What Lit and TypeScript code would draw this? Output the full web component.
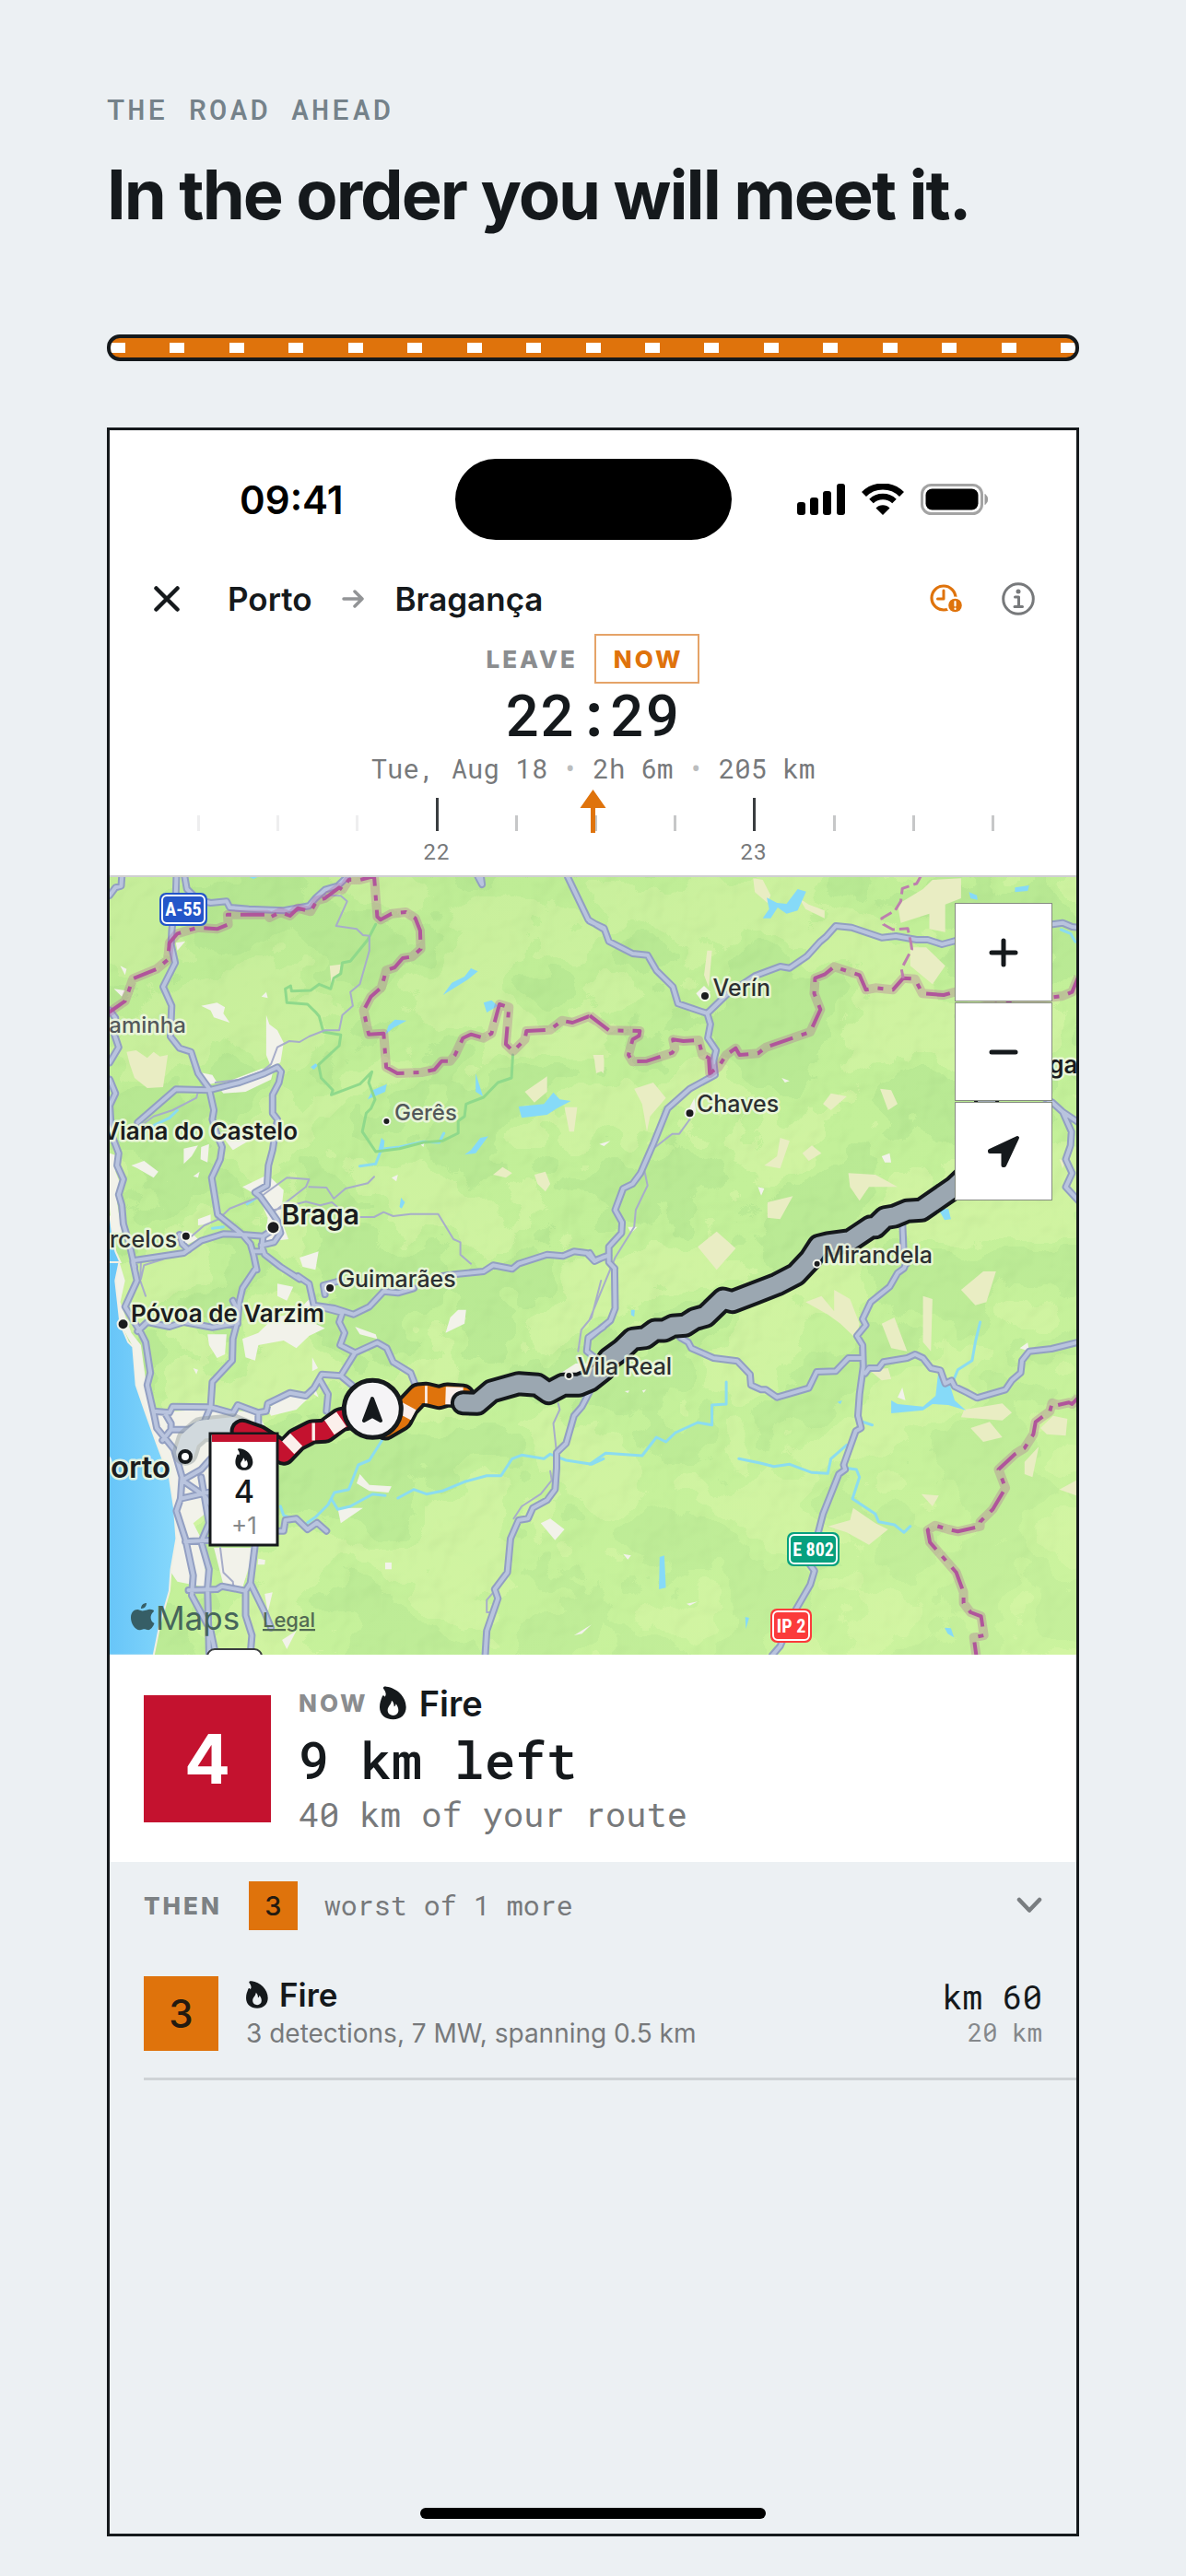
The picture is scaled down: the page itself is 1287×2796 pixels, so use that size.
import { LitElement, html, svg, css } from "lit";
import { customElement } from "lit/decorators.js";

/* ---------- map data ----------
   The map is digitised on four sheets. Sheet coordinates are turned into
   map units (1049 x 844) by the origin of the sheet and its resolution. */
type Sheet = "nw" | "ne" | "sw" | "se";
const ORIGIN: Record<Sheet, [number, number]> = {
  nw: [-4, -7],
  ne: [521, -7],
  sw: [-4, 418],
  se: [521, 418],
};
const at = (s: Sheet, x: number, y: number): [number, number] => [
  Math.round((x / 2.904 + ORIGIN[s][0]) * 10) / 10,
  Math.round((y / 3 + ORIGIN[s][1]) * 10) / 10,
];
const line = (s: Sheet, pts: string) =>
  "M" +
  pts
    .trim()
    .split(/\s+/)
    .map((p) => {
      const [x, y] = p.split(",").map(Number);
      return at(s, x, y).join(" ");
    })
    .join("L");
const lines = (s: Sheet, list: string[]) => list.map((p) => line(s, p)).join("");
const areas = (s: Sheet, list: string[]) => list.map((p) => line(s, p) + "Z").join("");

const ROADS =
  lines("nw", [
    "222,20 220,75 208,190 205,240 218,300 180,378 207,440 203,540 232,578 268,590 290,660 325,710 340,780 335,810 350,860 366,900 360,940 333,1000 352,1120 430,1185 455,1215 465,1250 475,1300",
    "248,20 255,60 290,95 330,105 380,100 390,120 450,125 560,130 640,115 660,90 690,62 730,50 760,20",
    "50,20 48,50 30,55 12,80",
    "12,455 30,480 22,520 40,575 12,625",
    "12,680 30,725 12,765 18,860 40,920 35,960 55,1005 40,1055 50,1090 55,1150 75,1220 90,1290",
    "100,820 220,712 325,715 420,690 500,660 540,640 552,655 545,690 525,730 525,790 540,810 525,910 512,960 508,1025 470,1048 485,1060 520,1110 540,1140 550,1180 530,1210 490,1220 500,1250 550,1290 610,1330",
    "85,1270 245,1245 300,1205 370,1183 430,1185 495,1190 540,1160",
    "495,1190 490,1240 465,1240",
    "232,1185 240,1215 260,1235",
    "1060,1320 1110,1313 1190,1305 1220,1285 1280,1297 1300,1280 1390,1250 1440,1255 1475,1240 1515,1245 1540,1272 1568,1258",
    "1455,20 1520,160 1568,190",
    "1172,20 1185,45 1182,20",
  ]) +
  lines("ne", [
    "0,165 45,187 60,230 135,270 182,275 210,325 262,378 278,433 370,465 380,500 372,545 398,585 390,620 395,665 315,710 245,775 200,890 160,985 135,1020 105,1035 80,1105 102,1145 100,1180 60,1225 60,1275 78,1295",
    "370,465 430,405 520,343 600,312 630,317 685,278 725,232 745,215 775,180 825,185 920,218 965,213 1030,225 1065,225 1110,240 1200,215",
    "1400,180 1458,175 1490,170 1520,183 1540,185",
    "1400,720 1458,755 1490,785 1540,820",
    "1490,785 1518,850 1515,895 1500,940 1520,985 1500,1030 1540,1075",
    "0,1245 15,1270 60,1252",
    "985,1140 990,1260 998,1280",
  ]) +
  lines("sw", [
    "85,0 98,60 60,145 110,230 125,260 140,360 130,400 150,490 160,540 215,610 240,700 235,770 222,810 250,900 275,1020 270,1085 330,1200 345,1275",
    "472,20 430,85 420,130 415,190 400,250 398,320 335,390 330,470 310,520 260,545 205,545 178,580",
    "150,485 200,490 210,470 330,472 400,492 415,465 480,490 480,560",
    "100,225 130,195 200,210 245,195 335,212 400,200",
    "400,125 412,150 415,200",
    "605,45 640,70 655,140 720,150 780,170 830,145 875,95 920,100 970,85",
    "690,105 685,75 740,60",
    "655,140 745,165 735,195 752,230 738,270 785,295 740,370 680,365 655,410 630,435 580,425 510,460 505,485 480,490",
    "785,295 855,262 885,280 905,325 960,360 975,400",
    "740,370 775,400",
    "675,385 700,430 695,485",
    "185,490 205,525 205,545",
    "240,710 300,675 330,640",
    "235,770 330,748",
    "240,710 310,760 330,790",
    "300,700 310,760 325,850 300,910 325,1000 320,1060 325,1275",
    "250,910 330,905",
    "260,1068 350,1065 365,1055 440,1070 455,1045 470,920",
    "455,1045 500,1140 520,1190",
    "440,1070 440,1150 460,1215 455,1275",
    "545,875 560,875 565,840 600,835 635,870 665,848 695,875",
    "1568,210 1520,245 1515,290 1540,310 1530,330",
    "1530,410 1500,470 1475,500 1450,590 1420,620 1420,670 1415,740 1390,775 1345,800 1330,835 1300,840 1275,900 1265,1010 1225,1065 1235,1095 1200,1200 1195,1280",
  ]) +
  lines("se", [
    "78,20 80,150 65,190 0,245",
    "285,245 310,260 320,280 390,312 465,322 505,365 508,400 540,415 555,415 590,440 690,410 715,357 775,355 815,312 860,312",
    "998,0 990,20 970,35 945,80 885,130 860,185 870,205 842,240 860,270 862,340 850,430 845,500 855,540 838,550 800,660 805,675 785,690 735,820 715,900 690,980 708,1005 695,1050 650,1130 600,1250 575,1280",
    "868,362 880,345 910,345 925,325 1000,312 1025,300 1050,312 1075,345 1105,352 1120,395 1140,385 1150,405 1190,425 1220,442 1310,415 1330,385 1358,360 1362,320 1385,290 1455,282 1540,260",
  ]);

const LANES =
  lines("nw", [
    "690,80 740,82 760,100 725,180 790,190 810,210 830,212 830,260 800,370 770,395 778,440 745,470 735,520 690,520 640,540 610,558 578,555 540,575 520,630 490,655 420,680 345,690",
    "290,720 285,740 210,780 150,800 110,830",
    "270,1190 310,1155 355,1135 390,1100 490,1060 570,1000 640,1005 630,1030 530,1110",
    "640,1030 695,1032 718,1068 755,1035 825,1018 845,997",
    "530,1105 630,1078 675,1090 712,1080 735,1100",
    "800,1128 845,1128 875,1112 905,1125 960,1118 1047,1118 1095,1200 1117,1210 1117,1250 1150,1280",
    "110,1330 120,1285 180,1265",
  ]) +
  lines("ne", [
    "315,810 282,857 260,857 200,905",
    "172,975 182,1025 145,1105 140,1160 80,1260 0,1460",
  ]) +
  lines("sw", [
    "1560,60 1530,180 1498,220 1488,290",
    "1425,460 1430,480 1410,525 1420,620",
    "1400,680 1405,710 1370,755 1310,795 1285,835",
    "360,930 370,1010 400,1040 402,1060",
    "1225,1070 1200,1100 1200,1140 1218,1140",
    "110,0 108,60 125,110",
  ]);

const PARK = line(
  "nw",
  "850,175 825,225 770,295 745,300 740,335 718,350 708,385 672,370 645,390 585,392 582,375 565,385 570,430 635,435 660,460 672,475 685,525 740,535 735,570 670,632 678,675 715,715 710,730 800,695 838,655 828,690 848,745 835,775 820,790 808,850 850,915 925,905 1000,885 1060,880 1110,855 1110,815 1130,800 1135,760 1190,738 1235,690 1278,675 1282,600"
);

const BORDER =
  line(
    "nw",
    "0,468 60,425 85,352 160,320 195,290 200,235 225,205 290,185 350,190 385,175 383,143 510,143 515,153 550,135 580,147 605,122 645,133 665,97 690,90 735,55 745,62 765,30 800,30 845,18 855,150 865,160 900,140 945,135 975,155 990,195 992,255 965,280 935,285 910,315 883,325 868,380 835,410 812,455 828,533 875,530 883,640 918,660 995,657 1035,648 1058,620 1085,620 1100,600 1125,545 1150,533 1190,545 1215,530 1240,435 1270,445 1260,565 1283,588 1320,550 1325,522 1400,518 1437,488 1470,495 1520,475 1545,490"
  ) +
  line(
    "ne",
    "0,472 60,520 158,522 155,538 135,550 122,600 135,622 180,620 260,593 268,580 262,550 295,555 343,552 355,600 375,610 378,660 405,640 430,600 460,578 472,600 530,595 555,575 695,525 727,452 707,400 710,350 740,338 770,313 850,340 870,388 900,382 955,388 988,350 1025,353 1048,400 1115,405 1150,395 1300,425 1460,412 1490,408 1520,395 1540,345"
  ) +
  line(
    "se",
    "1540,440 1520,462 1510,457 1475,465 1457,458 1450,485 1405,520 1398,560 1370,605 1340,625 1288,675 1310,735 1270,805 1230,845 1230,860 1160,877 1130,870 1088,857 1065,872 1072,912 1155,1010 1178,1075 1178,1110 1200,1140 1233,1153 1242,1215 1210,1222 1218,1280"
  );
const PROVINCE = line(
  "ne",
  "1045,15 1030,42 985,58 980,100 962,130 920,155 925,175 955,192 1002,188 1012,235 1015,255 982,320 988,350"
);

const RIVERS =
  lines("sw", [
    "870,580 830,645 795,660 765,740 720,750 700,790 660,830 635,848",
    "710,770 730,805 770,795 840,755 880,760",
    "920,768 970,740 1010,755 1060,745 1130,715 1200,695 1245,695 1280,640 1310,628 1380,640 1400,625 1450,645 1530,658 1568,640",
    "550,795 560,825 590,835",
  ]) +
  lines("se", [
    "0,658 50,622 165,630 210,570 240,585 270,555 340,522 385,530 385,465 430,462 430,390",
    "470,640 540,655 580,665 630,658 700,685 750,688 760,640 810,595",
    "805,670 840,675 850,700 828,770 900,820 910,845 960,855 990,880 1010,860",
    "860,520 890,530",
    "1230,195 1215,260 1205,320 1160,350 1140,400",
  ]) +
  lines("nw", [
    "865,915 850,955 800,962",
    "880,905 925,900 1000,883 1050,885 1065,855",
    "150,830 200,805 225,780",
    "335,1165 370,1160",
    "445,1085 475,1065",
  ]) +
  lines("ne", ["1485,192 1515,205 1530,232"]);

const LAKES =
  areas("nw", [
    "1062,405 1090,365 1130,345 1150,318 1172,328 1140,355",
    "1190,430 1215,422 1235,440 1200,462",
    "890,505 910,485 948,488 905,512 880,535",
    "1165,660 1188,735 1165,720",
    "1300,768 1380,760 1410,722 1430,745 1465,750 1420,775 1390,795 1310,805",
    "1130,925 1150,910 1180,870 1205,865 1165,920",
    "825,745 840,715 885,695 880,720",
    "858,910 868,870 878,880 874,918",
    "925,1095 930,1065 942,1080 932,1100",
    "645,640 660,628 668,634 655,648",
    "450,20 480,20 465,27",
  ]) +
  areas("ne", [
    "545,155 565,125 558,88 590,105 620,108 655,60 682,68 655,130 620,140 592,120 570,155",
    "1100,1105 1130,1100 1138,1135 1118,1138",
    "1195,70 1220,80 1222,95 1200,90",
    "1340,55 1385,48 1380,66 1340,70",
  ]) +
  areas("se", [
    "950,450 970,462 1050,470 1090,435 1098,360 1115,400 1135,400 1150,450 1185,482 1130,465 1080,462 1050,482 950,492",
    "220,960 235,955 240,1060 218,1065",
    "490,1155 502,1158 492,1195",
    "1118,1190 1138,1192 1148,1222 1128,1210",
    "780,455 795,450 790,462",
    "130,155 142,155 140,178 130,172",
  ]);

const OCEAN =
  areas("nw", ["0,1110 14,1130 20,1180 30,1240 45,1275 0,1275"]) +
  areas("sw", [
    "0,0 42,0 30,60 45,200 70,260 85,275 95,400 125,490 160,590 200,700 215,800 222,900 205,1000 200,1070 170,1180 150,1280 0,1280",
  ]);

const URBAN =
  areas("nw", [
    "300,440 350,430 375,445 370,465 390,495 340,478 330,455",
    "505,470 515,500 540,520 560,560 550,625 520,640 505,600",
    "350,700 490,645 530,640 520,680 440,720 370,725",
    "285,655 335,665 350,690 310,700",
    "80,960 120,945 165,980 150,1000 100,970",
    "245,905 290,895 270,930 245,955",
    "300,900 325,890 320,950 298,940",
    "370,870 430,860 450,880 400,910",
    "430,1030 510,990 560,1040 550,1130 575,1200 500,1210 510,1130 480,1060",
    "290,1135 330,1120 330,1150 290,1155",
    "610,1260 670,1240 660,1300 620,1290",
    "230,1190 270,1180 290,1200 250,1220",
    "12,920 40,930 30,980 45,1020 35,1080 50,1180 20,1180 12,1100",
    "220,235 250,230 225,260",
    "25,385 60,390 50,410",
    "45,310 65,320 60,340",
    "490,410 505,395 510,415",
    "985,885 1005,880 1000,900",
    "900,1000 920,990 915,1012",
    "275,995 295,980 290,1000",
  ]) +
  areas("ne", [
    "605,675 630,685 615,690",
    "30,890 65,880 45,897",
    "920,930 945,920 950,950 930,950",
    "530,1030 550,1035 540,1058",
    "120,1160 150,1160 130,1180",
    "335,400 360,375 380,395 350,420",
    "315,770 330,740 335,790",
  ]) +
  areas("sw", [
    "42,0 60,60 45,130 80,230 110,270 125,380 150,490 330,478 480,490 505,545 330,545 335,800 275,850 300,900 320,1060 225,1040 205,1010 222,900 215,800 200,700 160,590 125,490 95,400 85,275 45,200 30,60",
    "320,235 380,235 375,300 350,312 325,270",
    "430,250 480,230 530,180 600,165 640,120 660,200 690,215 640,240 600,280 560,255 480,270 470,320 440,310",
    "540,70 590,80 570,125 540,110",
    "510,480 560,430 640,440 600,480 520,500",
    "1085,180 1110,155 1135,155 1130,200 1070,230",
    "800,690 830,725 900,730 890,750 830,745 790,720",
    "730,800 810,800 740,850",
    "340,930 470,930 430,1060 370,1050",
    "500,1080 525,1075 510,1140",
    "1370,850 1400,835 1445,870 1415,905",
    "880,978 900,978 900,1000 880,1000",
    "480,965 502,970 500,985 478,985",
    "1475,1215 1530,1180 1500,1210",
    "555,1230 600,1200 570,1260",
    "1435,360 1480,330 1520,330 1500,370",
    "275,345 290,350 285,365",
    "650,310 668,345 650,355",
    "785,210 850,235 855,250 800,235",
    "655,430 660,415 670,440",
  ]) +
  areas("se", [
    "105,950 130,955 120,968",
    "305,1112 340,1105 315,1118",
    "1355,280 1380,262 1385,290",
    "970,440 985,408 995,450",
    "110,420 125,418 120,426",
    "165,418 178,415 170,425",
  ]);

const DRY =
  areas("nw", [
    "65,590 95,585 130,610 150,590 170,605 195,600 180,705 130,708 90,675 75,630",
    "1320,720 1390,670 1390,720 1350,755",
    "1445,770 1485,770 1475,850 1460,850",
    "1220,990 1250,965 1280,985 1260,1000",
    "1350,990 1385,980 1400,1020 1385,1045 1360,1020",
    "705,310 740,305 735,340 710,370",
    "1535,600 1568,600 1568,660 1545,640",
  ]) +
  areas("ne", [
    "515,25 545,30 570,80 560,105 520,70",
    "660,90 690,110 740,130 740,155 680,125",
    "1080,30 1170,25 1170,90 1120,110 1120,200 1070,190 1070,140 980,170 970,110 1050,60",
    "1010,250 1060,250 1120,310 1080,370 1010,310",
    "140,710 200,690 240,740 190,800 180,850 165,760",
    "735,760 760,725 810,735 760,780",
    "915,710 950,715 970,760 940,780",
    "600,870 630,880 600,970 550,960 590,930",
    "670,920 700,895 730,920 690,945",
    "815,985 900,990 970,1030 880,1030 850,1075 820,1030",
    "560,1080 640,1060 600,1135 560,1130",
    "340,1225 400,1175 460,1230 400,1300 360,1250",
    "370,260 385,260 375,380 360,340",
    "15,620 45,610 45,650 20,660",
    "1480,940 1500,945 1490,970",
  ]) +
  areas("se", [
    "680,130 730,110 770,160 770,90 820,120 850,200 840,250 790,200 750,170",
    "920,200 960,180 1000,290 950,280",
    "1050,110 1080,120 1075,290 1050,260",
    "1170,90 1240,30 1280,30 1250,130 1215,140",
    "750,860 820,840 830,800 900,850 940,870 880,920 810,880",
    "1045,755 1100,760 1080,795",
    "1200,540 1260,520 1300,570 1240,585",
    "1370,650 1415,600 1395,700 1370,690",
    "1420,540 1460,500 1505,510 1500,565 1440,560",
    "1480,740 1533,710 1533,760",
    "1180,480 1300,460 1330,490 1300,515 1170,505",
    "880,350 940,345 950,380 920,385",
  ]);

const AHEAD =
  line("sw", "1125,458 1170,460 1215,420 1300,395 1360,400 1395,425 1440,400 1490,400 1525,385 1568,350") +
  "L" +
  (
    line(
      "se",
      "45,340 60,315 100,285 135,250 175,245 205,222 235,222 262,208 300,205 330,185 365,175 420,120 450,128 520,100 590,72 650,40"
    ) +
    "L" +
    line(
      "ne",
      "695,1265 722,1222 750,1215 820,1205 885,1160 900,1160 930,1130 960,1125 1000,1108 1045,1105 1150,1030 1200,980 1230,880 1250,760 1260,600"
    ).slice(1)
  ).slice(1);
const CALM = line("sw", "250,620 262,580 300,545 400,535 430,548");
const RED = line("sw", "430,550 480,568 530,600 560,622 600,578 650,552 690,550 740,512 800,500");
const ORANGE = line("sw", "880,540 930,510 950,470 985,432 1010,430 1050,440 1075,432 1125,436");
const DASHES = lines("sw", ["574,604 600,578", "649,552 659,552", "704,538 742,511", "936,500 953,467", "1005,431 1013,431", "1070,434 1125,436"]);

interface Place {
  name: string;
  pos: [number, number];
  size: number;
  cls: string;
  dot?: [number, number, number];
}
const PLACES: Place[] = [
  { name: "Caminha", pos: at("nw", 252, 528), size: 24, cls: "minor end" },
  { name: "Viana do Castelo", pos: at("nw", 604, 875), size: 26, cls: "town end" },
  { name: "Gerês", pos: at("nw", 909, 814), size: 24, cls: "minor", dot: [...at("nw", 884, 816), 3] },
  { name: "Braga", pos: at("nw", 553, 1152), size: 30, cls: "city", dot: [...at("nw", 527, 1162), 6] },
  { name: "Barcelos", pos: at("nw", 224, 1228), size: 25, cls: "plain end", dot: [...at("nw", 252, 1190), 4] },
  { name: "Guimarães", pos: at("sw", 730, 80), size: 25, cls: "plain", dot: [...at("sw", 706, 84), 4] },
  { name: "Póvoa de Varzim", pos: at("sw", 78, 196), size: 26, cls: "town", dot: [...at("sw", 54, 202), 5] },
  { name: "Porto", pos: at("sw", 204, 702), size: 33, cls: "city end" },
  { name: "Vila Real", pos: at("sw", 1486, 366), size: 25, cls: "plain", dot: [...at("sw", 1459, 369), 3] },
  { name: "Verín", pos: at("ne", 388, 407), size: 25, cls: "plain", dot: [...at("ne", 363, 408), 4] },
  { name: "Chaves", pos: at("ne", 337, 787), size: 25, cls: "plain", dot: [...at("ne", 315, 790), 4] },
  { name: "Mirandela", pos: at("ne", 736, 1279), size: 25, cls: "plain", dot: [...at("ne", 716, 1280), 3] },
  { name: "Bragança", pos: [977, 213], size: 26, cls: "town" },
];

const SHIELDS = [
  { name: "A-55", x: 54, y: 17, w: 52, h: 36, fill: "#2456c9" },
  { name: "E 802", x: 735, y: 711, w: 57, h: 37, fill: "#06a07e" },
  { name: "IP 2", x: 717, y: 794, w: 45, h: 37, fill: "#fb3b3b" },
];

const FLAME =
  "M12 7C11 1 16 0 22 1C55 5 86 33 86 68C86 92 68 108 44 108C18 108 0 92 0 68C0 53 4 45 8 34C10 28 14 28 17 34C23 27 20 17 12 7ZM39 46C38 60 26 64 26 78C26 89 35 95 44 95C54 95 61 88 61 78C61 69 57 63 53 57C52 62 50 65 47 66C47 58 45 51 39 46Z";
const flame = (cls: string) => html`<svg class=${cls} viewBox="0 0 87 109" aria-hidden="true">
  <path fill="currentColor" fill-rule="evenodd" d=${FLAME} />
</svg>`;

@customElement("route-map")
export class RouteMap extends LitElement {
  static styles = css`
    :host {
      display: block;
      position: relative;
      overflow: hidden;
      background: #c0ee97;
    }
    .canvas {
      display: block;
      width: 100%;
      aspect-ratio: 1049 / 844;
    }
    text {
      font-family: Inter, "Liberation Sans", sans-serif;
    }
    .road,
    .lane,
    .river,
    .route {
      fill: none;
      stroke-linejoin: round;
      stroke-linecap: round;
    }
    .frontier {
      fill: none;
      stroke-linejoin: round;
    }
    .label {
      paint-order: stroke;
      stroke: #eef7e0;
      stroke-opacity: 0.9;
      stroke-width: 5px;
      stroke-linejoin: round;
      fill: #1b1c1e;
    }
    .plain {
      font-weight: 500;
      fill: #2c2f31;
    }
    .minor {
      font-weight: 500;
      fill: #53585a;
    }
    .town,
    .city {
      font-weight: 600;
    }
    .end {
      text-anchor: end;
    }
    .mid {
      text-anchor: middle;
    }
    .shield {
      font: 700 20px "Roboto Condensed", "Liberation Sans Narrow", "Open Sans Condensed", Roboto, sans-serif;
      fill: #fff;
    }
    .legal {
      font-size: 22px;
      font-weight: 500;
      fill: #526a54;
      text-decoration: underline;
    }
    .brand {
      font-size: 35px;
      fill: #46655b;
    }
    .controls {
      position: absolute;
      top: 28px;
      right: 26px;
      display: flex;
      flex-direction: column;
      width: 106px;
      gap: 1px;
    }
    .control {
      display: grid;
      place-items: center;
      height: 107px;
      padding: 0;
      border: 1px solid #858b80;
      background: #fff;
      color: #15191c;
    }
    .control svg {
      width: 36px;
      height: 36px;
    }
  `;

  render() {
    const [mx, my] = at("sw", 840, 478);
    return html`
      <svg class="canvas" viewBox="0 0 1049 844" preserveAspectRatio="xMidYMid slice" role="img" aria-label="Route map">
        <defs>
          <linearGradient id="sea" x1="0" x2="1">
            <stop offset="0" stop-color="#66c4f8" />
            <stop offset="1" stop-color="#86d8fc" />
          </linearGradient>
          <linearGradient id="climate" x1="0.2" y1="0" x2="0.8" y2="1">
            <stop offset="0" stop-color="#b4e58e" stop-opacity="0.4" />
            <stop offset="0.5" stop-color="#c3f099" stop-opacity="0.2" />
            <stop offset="1" stop-color="#d2f6a2" stop-opacity="0.5" />
          </linearGradient>
          <filter id="land" x="0" y="0" width="100%" height="100%" color-interpolation-filters="sRGB">
            <feTurbulence type="fractalNoise" baseFrequency="0.009 0.01" numOctaves="4" seed="11" />
            <feColorMatrix values="1 0 0 0 0  1 0 0 0 0  1 0 0 0 0  0 0 0 0 1" />
            <feComponentTransfer result="cover">
              <feFuncR type="discrete" tableValues=".72 .72 .72 .72 .72 .72 .72 .72 .72 .765 .765 .825 .825 .83 .83 .83 .83 .83 .83 .83" />
              <feFuncG type="discrete" tableValues=".91 .91 .91 .91 .91 .91 .91 .91 .91 .945 .945 .96 .96 .96 .96 .96 .96 .96 .96 .96" />
              <feFuncB type="discrete" tableValues=".58 .58 .58 .58 .58 .58 .58 .58 .58 .6 .6 .64 .64 .64 .64 .64 .64 .64 .64 .64" />
            </feComponentTransfer>
            <feTurbulence type="fractalNoise" baseFrequency="0.022" numOctaves="3" seed="4" result="h" />
            <feDiffuseLighting in="h" surfaceScale="10" diffuseConstant="1.1" lighting-color="#fff" result="lit">
              <feDistantLight azimuth="225" elevation="60" />
            </feDiffuseLighting>
            <feComponentTransfer in="lit" result="shade">
              <feFuncR type="linear" slope="0.09" intercept="0.915" />
              <feFuncG type="linear" slope="0.07" intercept="0.935" />
              <feFuncB type="linear" slope="0.09" intercept="0.915" />
            </feComponentTransfer>
            <feBlend in="cover" in2="shade" mode="multiply" />
          </filter>
        </defs>

        <rect width="1049" height="844" filter="url(#land)" />
        <rect width="1049" height="844" fill="url(#climate)" />
        <path d=${DRY} fill="#e9edc3" />
        <path d=${URBAN} fill="#f2f2ea" />
        <path d=${OCEAN} fill="url(#sea)" stroke="#f2f0e4" stroke-width="2" />
        <path class="river" d=${RIVERS} stroke="#8bdcf0" stroke-width="3" />
        <path d=${LAKES} fill="#86daf8" />
        <path class="lane" d=${PARK} stroke="#8fd98b" stroke-width="3" />
        <path class="lane" d=${LANES} stroke="#a7adc9" stroke-width="2" />
        <path class="road" d=${ROADS} stroke="#929fc2" stroke-width="8" />
        <path class="road" d=${ROADS} stroke="#b9c4de" stroke-width="4" />
        <path class="frontier" d=${BORDER} stroke="#b0559b" stroke-opacity="0.28" stroke-width="10" />
        <path class="frontier" d=${BORDER} stroke="#b0559b" stroke-width="4" stroke-dasharray="26 10 6 10" />
        <path class="frontier" d=${PROVINCE} stroke="#bd7fae" stroke-width="3" stroke-dasharray="14 5" />

        <path class="route" d=${CALM} stroke="#8c979c" stroke-opacity="0.45" stroke-width="28" />
        <path class="route" d=${CALM} stroke="#d1d9dd" stroke-width="20" />
        <path class="route" d=${RED} stroke="#14181b" stroke-width="27" />
        <path class="route" d=${ORANGE} stroke="#14181b" stroke-width="27" />
        <path class="route" d=${RED} stroke="#c4122f" stroke-width="19" />
        <path class="route" d=${ORANGE} stroke="#df730c" stroke-width="19" />
        <path d=${DASHES} fill="none" stroke="#fbefeb" stroke-width="19" />
        <path class="route" d=${AHEAD} stroke="#14181b" stroke-width="27" />
        <path class="route" d=${AHEAD} stroke="#9ba7b1" stroke-width="19" />

        ${PLACES.map(
          (p) => svg`
            ${p.dot
              ? svg`<circle cx=${p.dot[0]} cy=${p.dot[1]} r=${p.dot[2] + 1} fill="#1b1c1e" stroke="#f3f5ec" stroke-width="2" />`
              : ""}
            <text class="label ${p.cls}" x=${p.pos[0]} y=${p.pos[1]} font-size=${p.size}>${p.name}</text>`
        )}
        ${SHIELDS.map(
          (s) => svg`
            <rect x=${s.x} y=${s.y} width=${s.w} height=${s.h} rx="7" fill=${s.fill} />
            <rect x=${s.x + 3} y=${s.y + 3} width=${s.w - 6} height=${s.h - 6} rx="5" fill="none" stroke="#fff" stroke-width="2" />
            <text class="shield mid" x=${s.x + s.w / 2} y=${s.y + s.h / 2 + 7}>${s.name}</text>`
        )}

        <circle cx="82" cy="629" r="6" fill="#fff" stroke="#15191c" stroke-width="4" />

        <circle cx=${mx} cy=${my} r="31" fill="#f5f4f6" stroke="#15191c" stroke-width="5" />
        <path
          d="M285 566L294 590L285 585L276 590Z"
          fill="#15191c"
          stroke="#15191c"
          stroke-width="4"
          stroke-linejoin="round"
        />

        <rect x="109" y="604" width="73" height="121" fill="#fff" stroke="#15191c" stroke-width="3" />
        <rect x="111" y="605" width="70" height="8" fill="#c4122f" />
        <svg x="136" y="620" width="20" height="24" viewBox="0 0 87 109"><path fill="#15191c" fill-rule="evenodd" d=${FLAME} /></svg>
        <text class="mid" x="146" y="679" font-size="34" font-weight="500" fill="#15191c">4</text>
        <text class="mid" x="146" y="713" font-size="26" fill="#85888a">+1</text>

        <rect x="106" y="838" width="59" height="40" rx="8" fill="#fff" stroke="#3a3d3f" stroke-width="2" />
        <path
          transform="translate(22 788)"
          fill="#365e66"
          d="M16 8C18 8 20 6 23 7C25 7 27 8 25.500 9.500C21 13 22 20 26.500 22C25 26 22 30 19 29C16 28 15 28 12 29C7 31 1 23 1 16C1 9 6 6 10 7.500C12 8 13 9 16 8ZM12 6C12 2 15 0 18 0C18 3 16 6 12 6Z"
        />
        <text class="brand" x="50" y="817">Maps</text>
        <a href="#legal"><text class="legal" x="166" y="814">Legal</text></a>
      </svg>

      <div class="controls">
        <button class="control" aria-label="Zoom in">
          <svg viewBox="0 0 36 36"><path d="M5 18H31M18 5V31" stroke="currentColor" stroke-width="5" stroke-linecap="round" /></svg>
        </button>
        <button class="control" aria-label="Zoom out">
          <svg viewBox="0 0 36 36"><path d="M5 18H31" stroke="currentColor" stroke-width="5" stroke-linecap="round" /></svg>
        </button>
        <button class="control" aria-label="My location">
          <svg viewBox="0 0 36 36">
            <path d="M33 3L3 17V18H17.500V33H19Z" fill="currentColor" stroke="currentColor" stroke-width="4" stroke-linejoin="round" />
          </svg>
        </button>
      </div>
    `;
  }
}

const TICKS = Array.from({ length: 11 }, (_, i) => ({
  x: 96 + Math.round(i * 86.2),
  hour: i === 3 ? "22" : i === 7 ? "23" : "",
  past: i < 3,
}));

@customElement("app-root")
export class AppRoot extends LitElement {
  static styles = css`
    :host {
      display: flex;
      flex-direction: column;
      box-sizing: border-box;
      min-height: 100vh;
      padding: 98px 116px 43px;
      background: #ecf0f3;
      color: #15191c;
      font-family: Inter, "Liberation Sans", sans-serif;
      --mono: "Roboto Mono", "Liberation Mono", monospace;
      --orange: #df730c;
      --red: #c4122f;
      --ink: #15191c;
      --muted: #77797b;
    }
    h1,
    p {
      margin: 0;
    }
    .eyebrow {
      font: 500 32px/40px var(--mono);
      letter-spacing: 3px;
      color: #75828a;
    }
    .title {
      margin-top: 28px;
      font-size: 74px;
      line-height: 90px;
      font-weight: 700;
      letter-spacing: -2px;
    }
    .tape {
      display: flex;
      justify-content: space-between;
      align-items: center;
      flex: none;
      box-sizing: border-box;
      height: 29px;
      margin: 107px 0 72px;
      border: 4px solid var(--ink);
      border-radius: 14px;
      background: var(--orange);
      overflow: hidden;
    }
    .dash {
      width: 16px;
      height: 11px;
      background: #fff;
    }
    .phone {
      flex: 1;
      display: flex;
      flex-direction: column;
      border: 3px solid var(--ink);
    }
    .top {
      background: #fff;
      border-bottom: 2px solid #cfcfd1;
    }
    .status {
      display: grid;
      grid-template-columns: 1fr 300px 1fr;
      align-items: center;
      padding-top: 31px;
    }
    .clock {
      padding-left: 20px;
      text-align: center;
      font-size: 42px;
      font-weight: 600;
      color: #000;
    }
    .island {
      height: 88px;
      border-radius: 44px;
      background: #000;
    }
    .signals {
      display: flex;
      justify-content: center;
      align-items: center;
      gap: 18px;
      padding-right: 24px;
    }
    .bars {
      width: 52px;
      height: 34px;
    }
    .wifi {
      width: 46px;
      height: 34px;
    }
    .battery {
      width: 74px;
      height: 34px;
    }
    .nav {
      display: flex;
      align-items: center;
      height: 72px;
      margin-top: 28px;
      padding: 0 45px 0 48px;
    }
    .icon {
      display: block;
      padding: 0;
      border: 0;
      background: none;
      color: inherit;
    }
    .icon svg {
      display: block;
    }
    .x {
      width: 28px;
      height: 28px;
    }
    .trip {
      flex: 1;
      display: flex;
      align-items: center;
      gap: 33px;
      margin-left: 52px;
      font-size: 35px;
      font-weight: 600;
    }
    .to {
      width: 24px;
      height: 24px;
      color: #929496;
    }
    .delay {
      width: 36px;
      height: 36px;
      color: var(--orange);
      margin-right: 42px;
    }
    .info {
      width: 36px;
      height: 36px;
      color: var(--muted);
    }
    .leave {
      display: flex;
      justify-content: center;
      align-items: center;
      gap: 18px;
      margin-top: 2px;
    }
    .tag {
      font-size: 26px;
      font-weight: 800;
      letter-spacing: 3px;
      color: #8b8d8f;
    }
    .now {
      box-sizing: border-box;
      height: 54px;
      padding: 0 16px 0 19px;
      border: 2px solid #e5a368;
      background: none;
      color: var(--orange);
      font-family: inherit;
    }
    .time {
      text-align: center;
      font: 500 63px/66px var(--mono);
    }
    .facts {
      display: flex;
      justify-content: center;
      gap: 16px;
      margin-top: 6px;
      padding-bottom: 3px;
      font: 29px/40px var(--mono);
      color: var(--muted);
    }
    .sep {
      color: #bbbdbe;
    }
    .scale {
      display: block;
      width: 100%;
      aspect-ratio: 1049 / 93;
    }
    .scale text {
      font: 24px var(--mono);
      text-anchor: middle;
      fill: var(--muted);
    }
    .current {
      display: flex;
      align-items: center;
      gap: 30px;
      height: 225px;
      padding: 0 37px;
      background: #fff;
    }
    .level {
      flex: none;
      display: grid;
      place-items: center;
      background: var(--orange);
      color: #231a10;
      font-weight: 500;
    }
    .big {
      width: 138px;
      height: 138px;
      background: var(--red);
      color: #fff;
      font-size: 74px;
      font-weight: 700;
    }
    .small {
      width: 53px;
      height: 53px;
      font-size: 29px;
    }
    .medium {
      width: 81px;
      height: 81px;
      font-size: 42px;
    }
    .headline {
      display: flex;
      align-items: center;
      height: 48px;
    }
    .kind {
      font-size: 38px;
      font-weight: 600;
    }
    .flame-l {
      width: 29px;
      height: 37px;
      margin: 0 14px 0 12px;
    }
    .left {
      font: 500 56px/72px var(--mono);
    }
    .of {
      font: 37px/48px var(--mono);
      color: var(--muted);
    }
    .then {
      display: flex;
      align-items: center;
      width: 100%;
      height: 94px;
      padding: 0 37px;
      border: 0;
      background: none;
      color: inherit;
      text-align: left;
      font-family: inherit;
    }
    .then .tag {
      color: #7c8184;
    }
    .then .small {
      margin: 0 29px;
    }
    .worst {
      flex: 1;
      font: 30px/40px var(--mono);
      color: var(--muted);
    }
    .chevron {
      width: 28px;
      height: 20px;
      color: #797d80;
    }
    .event {
      display: flex;
      align-items: center;
      gap: 30px;
      height: 140px;
      margin-left: 37px;
      padding-right: 37px;
      border-bottom: 3px solid #cfd3d6;
    }
    .what {
      flex: 1;
    }
    .name {
      display: flex;
      align-items: center;
      gap: 12px;
      font-size: 35px;
      line-height: 42px;
      font-weight: 600;
    }
    .flame-s {
      width: 24px;
      height: 30px;
    }
    .detail {
      padding-top: 2px;
      font-size: 28px;
      line-height: 38px;
      color: var(--muted);
    }
    .where {
      text-align: right;
    }
    .km {
      font: 36px/42px var(--mono);
    }
    .span {
      font: 27px/36px var(--mono);
      color: #85888b;
    }
    .home {
      width: 375px;
      height: 12px;
      margin: auto auto 16px;
      border-radius: 6px;
      background: #000;
    }
  `;

  render() {
    return html`
      <p class="eyebrow">THE ROAD AHEAD</p>
      <h1 class="title">In the order you will meet it.</h1>
      <div class="tape" aria-hidden="true">${Array.from({ length: 17 }, () => html`<span class="dash"></span>`)}</div>

      <main class="phone">
        <header class="top">
          <div class="status">
            <span class="clock">09:41</span>
            <span class="island"></span>
            <span class="signals">
              <svg class="bars" viewBox="0 0 52 34">
                <rect x="0" y="20" width="9" height="14" rx="3" />
                <rect x="14" y="15" width="9" height="19" rx="3" />
                <rect x="28" y="8" width="9" height="26" rx="3" />
                <rect x="43" y="0" width="9" height="34" rx="3" />
              </svg>
              <svg class="wifi" viewBox="0 0 46 34">
                <path d="M2.500 11.500A29 29 0 0 1 43.500 11.500" fill="none" stroke="#000" stroke-width="7" />
                <path d="M10.500 19A18 18 0 0 1 35.500 19" fill="none" stroke="#000" stroke-width="6.500" />
                <path d="M23 34L15.500 26.500A10.500 10.500 0 0 1 30.500 26.500Z" />
              </svg>
              <svg class="battery" viewBox="0 0 74 34">
                <rect x="1.500" y="1.500" width="65" height="31" rx="10" fill="none" stroke="#a3a3a3" stroke-width="3" />
                <rect x="5.500" y="5.500" width="57" height="23" rx="7" />
                <path d="M70 11.500A7 7 0 0 1 70 22.500Z" fill="#9b9b9b" stroke="#9b9b9b" />
              </svg>
            </span>
          </div>

          <nav class="nav">
            <button class="icon" aria-label="Close">
              <svg class="x" viewBox="0 0 28 28">
                <path d="M2.500 2.500L25.500 25.500M25.500 2.500L2.500 25.500" stroke="currentColor" stroke-width="4.500" stroke-linecap="round" />
              </svg>
            </button>
            <span class="trip">
              <span>Porto</span>
              <svg class="to" viewBox="0 0 24 24" aria-hidden="true">
                <path d="M2 12H22M14 4L22 12L14 20" fill="none" stroke="currentColor" stroke-width="3.500" stroke-linecap="round" stroke-linejoin="round" />
              </svg>
              <span>Bragança</span>
            </span>
            <button class="icon" aria-label="Delay alert">
              <svg class="delay" viewBox="0 0 36 36">
                <circle cx="15" cy="17" r="13" fill="none" stroke="currentColor" stroke-width="3.200" />
                <path d="M15 9V18H8.500" fill="none" stroke="currentColor" stroke-width="3" stroke-linecap="round" stroke-linejoin="round" />
                <circle cx="27.500" cy="25" r="9.500" fill="#fff" />
                <circle cx="27.500" cy="25" r="7.300" fill="currentColor" />
                <path d="M27.500 21V25.500M27.500 28.700V29" stroke="#fff" stroke-width="2.200" stroke-linecap="round" />
              </svg>
            </button>
            <button class="icon" aria-label="Information">
              <svg class="info" viewBox="0 0 36 36">
                <circle cx="18" cy="18" r="16.300" fill="none" stroke="currentColor" stroke-width="3" />
                <circle cx="18" cy="10" r="2.500" fill="currentColor" />
                <path d="M14.500 16H18.500V26M14 26.500H22.500" fill="none" stroke="currentColor" stroke-width="3" stroke-linecap="round" stroke-linejoin="round" />
              </svg>
            </button>
          </nav>

          <div class="leave">
            <span class="tag">LEAVE</span>
            <button class="tag now">NOW</button>
          </div>
          <p class="time">22:29</p>
          <p class="facts">
            <span>Tue, Aug 18</span><span class="sep">•</span><span>2h 6m</span><span class="sep">•</span><span>205 km</span>
          </p>
          <svg class="scale" viewBox="0 0 1049 93" role="img" aria-label="Departure time scale">
            ${TICKS.map((t) =>
              t.hour
                ? svg`<rect x=${t.x - 1} y="9" width="3" height="36" fill="#3a3d40" /><text x=${t.x} y="76">${t.hour}</text>`
                : svg`<rect x=${t.x - 1} y="28" width="3" height="17" fill=${t.past ? "#eeeeef" : "#c6c7c8"} />`
            )}
            <path d="M524.500 0L538.500 20H527V47H522V20H510.500Z" fill="#df730c" />
          </svg>
        </header>

        <route-map></route-map>

        <section class="current">
          <span class="level big">4</span>
          <div>
            <div class="headline">
              <span class="tag">NOW</span>${flame("flame-l")}<span class="kind">Fire</span>
            </div>
            <p class="left">9 km left</p>
            <p class="of">40 km of your route</p>
          </div>
        </section>

        <button class="then" aria-expanded="true">
          <span class="tag">THEN</span>
          <span class="level small">3</span>
          <span class="worst">worst of 1 more</span>
          <svg class="chevron" viewBox="0 0 28 20" aria-hidden="true">
            <path d="M3 4L14 15.500L25 4" fill="none" stroke="currentColor" stroke-width="4.500" stroke-linecap="round" stroke-linejoin="round" />
          </svg>
        </button>

        <article class="event">
          <span class="level medium">3</span>
          <div class="what">
            <div class="name">${flame("flame-s")}<span>Fire</span></div>
            <p class="detail">3 detections, 7 MW, spanning 0.5 km</p>
          </div>
          <div class="where">
            <p class="km">km 60</p>
            <p class="span">20 km</p>
          </div>
        </article>

        <div class="home"></div>
      </main>
    `;
  }
}
